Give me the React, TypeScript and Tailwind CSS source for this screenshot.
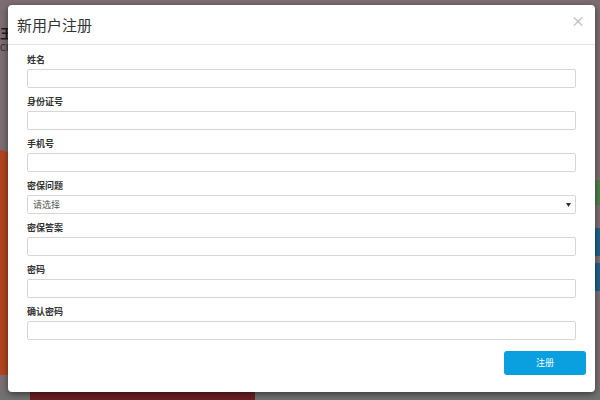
const fields = ["姓名", "身份证号", "手机号", "密保问题", "密保答案", "密码", "确认密码"];

function Field({ label }: { label: string }) {
  const isSelect = label === "密保问题";
  return (
    <div className="mb-[8px]">
      <label className="block h-[12px] mb-[3px] text-[9px] leading-[12px] font-bold text-[#333]">{label}</label>
      {isSelect ? (
        <div className="h-[19px] rounded-[2px] border border-[#d6d6d6] bg-white flex items-center justify-between pl-[5px] pr-[4px] text-[9px] text-[#555]">
          <span>请选择</span>
          <svg width="5" height="4" viewBox="0 0 5 4">
            <path d="M0 0 L5 0 L2.5 4 Z" fill="#333" />
          </svg>
        </div>
      ) : (
        <input className="block w-full h-[19px] rounded-[2px] border border-[#d6d6d6] bg-white outline-none" />
      )}
    </div>
  );
}

export default function App() {
  return (
    <div
      className="relative w-[600px] h-[400px] overflow-hidden bg-[#7b6d71] pl-[8px] pt-[5px]"
      style={{ fontFamily: '"Noto Sans CJK SC", "Noto Sans", sans-serif' }}
    >
      {/* page behind the backdrop */}
      <div className="absolute left-0 top-[26px] text-[13px] font-bold text-[#1d1d1d] leading-none">王</div>
      <div className="absolute left-0 top-[43px] text-[9px] text-[#2a2a2a] leading-none">CI</div>
      <div className="absolute left-0 top-[150px] w-[12px] h-[225px] bg-[#b0441f] rounded-tr-[40px]" />
      <div className="absolute left-0 bottom-0 w-full h-[10px] bg-[#717171]" />
      <div className="absolute left-[30px] bottom-0 w-[225px] h-[10px] bg-[#6c1f22]" />
      <div className="absolute right-0 top-[180px] w-[6px] h-[25px] bg-[#4f7d4a]" />
      <div className="absolute right-0 top-[228px] w-[6px] h-[28px] bg-[#1f6189]" />
      <div className="absolute right-0 top-[263px] w-[6px] h-[28px] bg-[#1f6189]" />

      {/* modal */}
      <div className="relative w-[587px] h-[387px] bg-white rounded-[4px] shadow-[0_2px_6px_rgba(0,0,0,0.5)] flex flex-col">
        <div className="h-[40px] shrink-0 border-b border-[#e5e5e5] flex items-center justify-between pl-[9px] pr-[10px]">
          <h4 className="text-[15px] text-[#333] leading-none">新用户注册</h4>
          <span className="text-[14px] text-[#b5b5b5] leading-none -mt-[10px]">×</span>
        </div>
        <div className="px-[19px] pt-[9px]">
          {fields.map((f) => (
            <Field key={f} label={f} />
          ))}
        </div>
        <div className="flex justify-end pr-[9px] pt-[3px]">
          <button className="w-[82px] h-[24px] rounded-[3px] bg-[#0aa0e0] text-white text-[9px]">注册</button>
        </div>
      </div>
    </div>
  );
}
